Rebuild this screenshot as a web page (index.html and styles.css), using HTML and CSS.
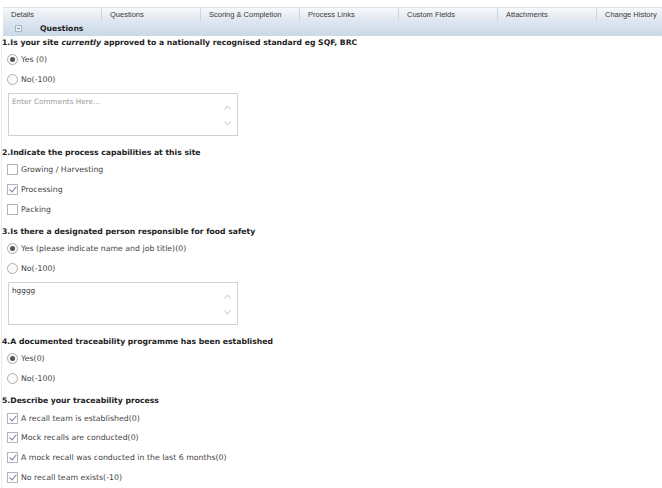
FILE: index.html
```html
<!DOCTYPE html>
<html>
<head>
<meta charset="utf-8">
<link rel="stylesheet" href="styles.css">
</head>
<body>
<div class="page">
  <div class="tabs">
    <div class="tab">Details</div>
    <div class="tab">Questions</div>
    <div class="tab">Scoring &amp; Completion</div>
    <div class="tab">Process Links</div>
    <div class="tab">Custom Fields</div>
    <div class="tab">Attachments</div>
    <div class="tab">Change History</div>
  </div>
  <div class="section-head">
    <svg class="collapse" width="7" height="7" viewBox="0 0 7 7"><rect x="0.5" y="0.5" width="6" height="6" fill="#e8eef5" stroke="#a9b4c0"/><line x1="2" y1="3.5" x2="5" y2="3.5" stroke="#7d8894"/></svg>
    <span class="section-title">Questions</span>
  </div>
  <div class="content">
    <div class="question">
      <div class="q-title">1.Is your site <em>currently</em> approved to a nationally recognised standard eg SQF, BRC</div>
      <div class="opt"><span class="radio on"></span><span>Yes (0)</span></div>
      <div class="opt"><span class="radio"></span><span>No(-100)</span></div>
      <div class="comment">
        <div class="comment-text placeholder">Enter Comments Here...</div>
        <div class="arrows">
          <svg width="7" height="5" viewBox="0 0 7 5"><polyline points="0.5,4.5 3.5,1 6.5,4.5" fill="none" stroke="#b9bfc6"/></svg>
          <svg width="7" height="5" viewBox="0 0 7 5"><polyline points="0.5,0.5 3.5,4 6.5,0.5" fill="none" stroke="#b9bfc6"/></svg>
        </div>
      </div>
    </div>
    <div class="question">
      <div class="q-title">2.Indicate the process capabilities at this site</div>
      <div class="opt"><span class="check"></span><span>Growing / Harvesting</span></div>
      <div class="opt"><span class="check on"></span><span>Processing</span></div>
      <div class="opt"><span class="check"></span><span>Packing</span></div>
    </div>
    <div class="question">
      <div class="q-title">3.Is there a designated person responsible for food safety</div>
      <div class="opt"><span class="radio on"></span><span>Yes (please indicate name and job title)(0)</span></div>
      <div class="opt"><span class="radio"></span><span>No(-100)</span></div>
      <div class="comment">
        <div class="comment-text">hgggg</div>
        <div class="arrows">
          <svg width="7" height="5" viewBox="0 0 7 5"><polyline points="0.5,4.5 3.5,1 6.5,4.5" fill="none" stroke="#b9bfc6"/></svg>
          <svg width="7" height="5" viewBox="0 0 7 5"><polyline points="0.5,0.5 3.5,4 6.5,0.5" fill="none" stroke="#b9bfc6"/></svg>
        </div>
      </div>
    </div>
    <div class="question">
      <div class="q-title">4.A documented traceability programme has been established</div>
      <div class="opt"><span class="radio on"></span><span>Yes(0)</span></div>
      <div class="opt"><span class="radio"></span><span>No(-100)</span></div>
    </div>
    <div class="question">
      <div class="q-title">5.Describe your traceability process</div>
      <div class="opt"><span class="check on"></span><span>A recall team is established(0)</span></div>
      <div class="opt"><span class="check on"></span><span>Mock recalls are conducted(0)</span></div>
      <div class="opt"><span class="check on"></span><span>A mock recall was conducted in the last 6 months(0)</span></div>
      <div class="opt"><span class="check on"></span><span>No recall team exists(-10)</span></div>
    </div>
  </div>
</div>
</body>
</html>
```

FILE: styles.css
```css
html, body {
  margin: 0;
  padding: 0;
  background: #ffffff;
  overflow: hidden;
}
body {
  font-family: "DejaVu Sans", Verdana, sans-serif;
  font-size: 7.8px;
  color: #333;
}
.page {
  padding-top: 7px;
}
.tabs {
  margin-left: 3px;
  display: grid;
  grid-template-columns: repeat(7, 99px);
  height: 14px;
  border-top: 1px solid #dde3ea;
  background: linear-gradient(#f6f8fb, #dfe6ee);
  box-sizing: border-box;
  overflow: hidden;
}
.tab {
  font-family: "Liberation Sans", Arial, sans-serif;
  font-size: 7.5px;
  color: #3a3a3a;
  line-height: 13px;
  padding-left: 8px;
  border-right: 1px solid #cdd5de;
  white-space: nowrap;
}
.section-head {
  margin-left: 3px;
  height: 15px;
  display: flex;
  align-items: center;
  background: linear-gradient(#dde7f2, #cbd8e7);
}
.collapse {
  margin-left: 12px;
}
.section-title {
  margin-left: 18px;
  font-weight: bold;
  font-size: 7.7px;
  color: #222;
}
.content {
  padding-left: 2px;
  border-left: 1px solid #ececec;
  margin-left: 1px;
}
.question {
  padding-bottom: 6px;
}
.q-title {
  font-weight: bold;
  font-size: 7.7px;
  color: #222;
  line-height: 14px;
  white-space: nowrap;
  margin-left: -2px;
}
.q-title em {
  font-style: italic;
}
.opt {
  height: 19.8px;
  display: flex;
  align-items: center;
  padding-left: 3px;
  color: #444;
  white-space: nowrap;
}
.radio {
  width: 11px;
  height: 11px;
  box-sizing: border-box;
  border: 1px solid #a9adb2;
  border-radius: 50%;
  background: #fafafa;
  margin-right: 3px;
  display: flex;
  align-items: center;
  justify-content: center;
}
.radio.on::after {
  content: "";
  width: 5px;
  height: 5px;
  border-radius: 50%;
  background: #555;
}
.check {
  width: 11px;
  height: 11px;
  box-sizing: border-box;
  border: 1px solid #b1b5ba;
  background: #fff;
  margin-right: 3px;
  position: relative;
}
.check.on::after {
  content: "";
  position: absolute;
  left: 3px;
  top: 0px;
  width: 3px;
  height: 6px;
  border-right: 1px solid #6f7f95;
  border-bottom: 1px solid #6f7f95;
  transform: rotate(40deg);
}
.comment {
  margin: 3px 0 4px 4px;
  width: 230px;
  height: 43px;
  box-sizing: border-box;
  border: 1px solid #cfd3d7;
  display: flex;
}
.comment-text {
  flex: 1;
  padding: 3px 3px;
  font-size: 7.3px;
  color: #333;
}
.comment-text.placeholder {
  color: #9a9a9a;
}
.arrows {
  width: 14px;
  display: flex;
  flex-direction: column;
  justify-content: space-between;
  align-items: center;
  padding: 11px 0 9px;
  margin-right: 3px;
}
.arrows svg {
  display: block;
}
```
